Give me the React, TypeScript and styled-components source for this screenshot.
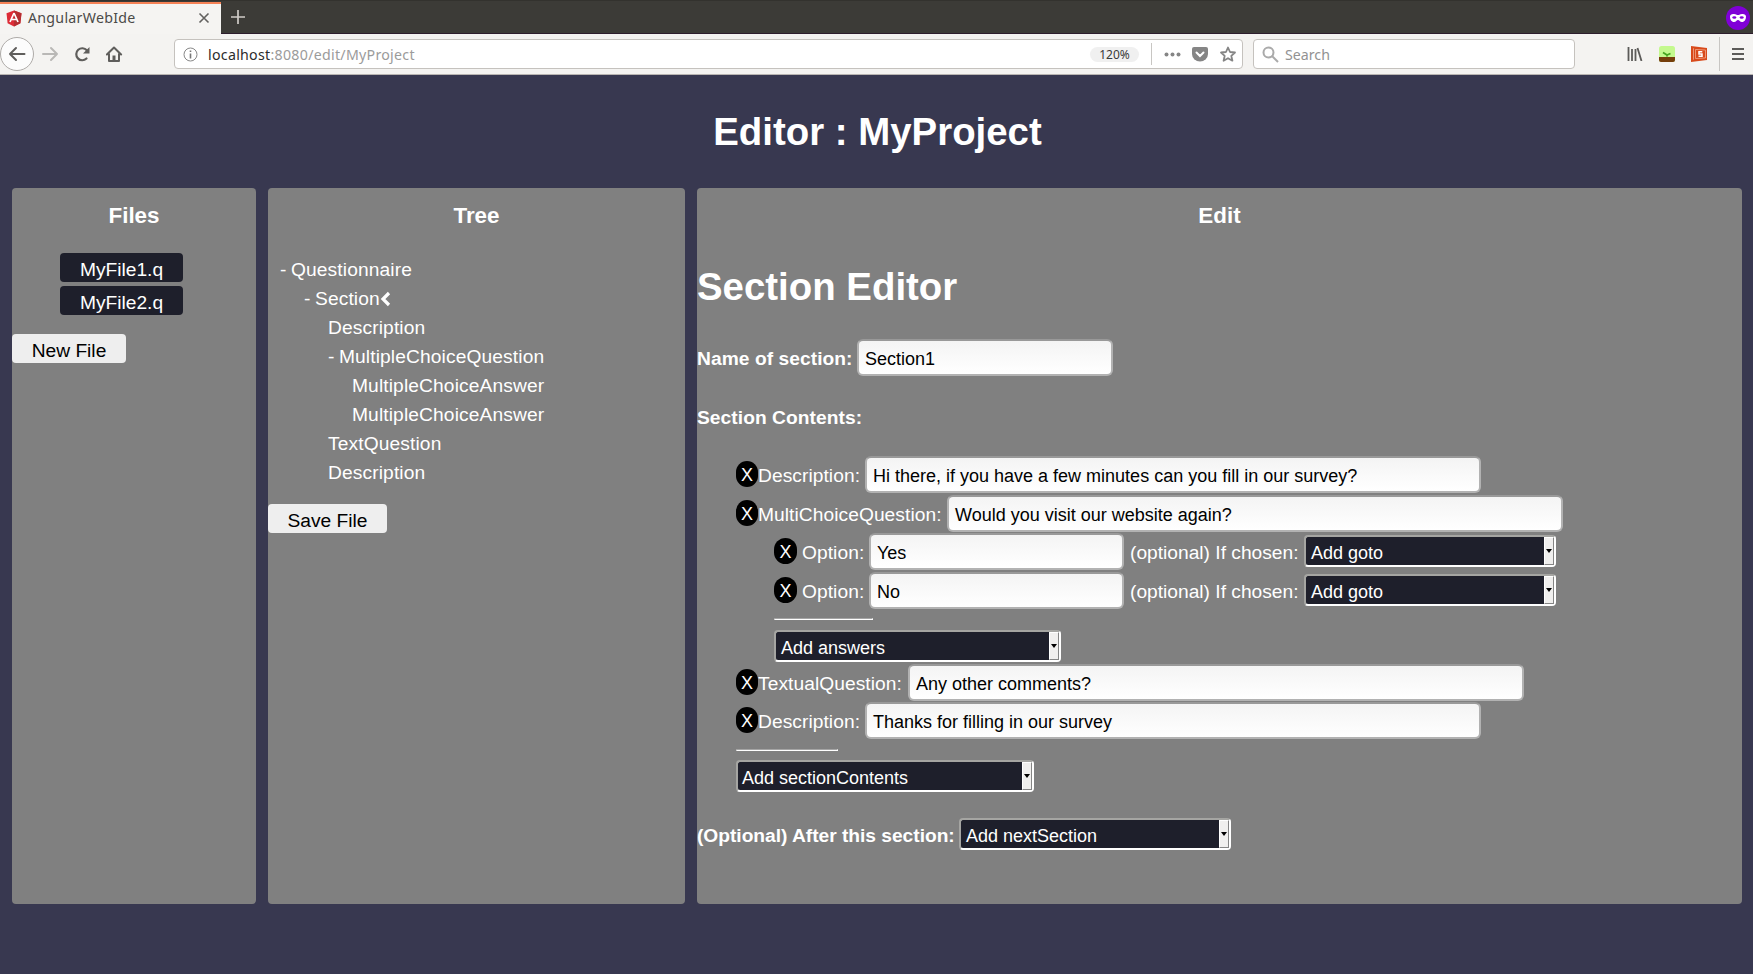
import React from "react";
import styled, { createGlobalStyle, css } from "styled-components";

const GlobalStyle = createGlobalStyle`
  * { box-sizing: border-box; }
  body { margin: 0; background: #383850; }
`;

const Page = styled.div`
  width: 1753px;
  height: 974px;
  overflow: hidden;
  background: #383850;
  color: #fff;
  font: 19.2px/29px "Liberation Sans", Arial, sans-serif;
`;

const TabStrip = styled.header`
  display: flex;
  align-items: flex-start;
  height: 34px;
  padding-top: 2px;
  background: #3c3b37;
  border-bottom: 1px solid #2d1e2d;
  box-shadow: inset 0 1px #33322e;
`;

const Tab = styled.div`
  display: flex;
  align-items: center;
  width: 221px;
  height: 32px;
  padding: 0 11px 2px 6px;
  background: #f5f4f2;
  border-top: 2px solid #f58256;
  color: #4b4a48;
  font: 14.2px "Noto Sans", sans-serif;
  white-space: nowrap;

  span { flex: 1; margin: -1px 0 0 6px; letter-spacing: 0.27px; }
`;

const NewTab = styled.svg`
  margin: 8px 0 0 10px;
`;

const PrivateBadge = styled.svg`
  margin: 4px 3px 0 auto;
`;

const Toolbar = styled.nav`
  display: flex;
  align-items: center;
  height: 41px;
  background: #f4f3f1;
  border-bottom: 1px solid #b9b5b2;
  font: 14.2px "Noto Sans", sans-serif;

  svg { display: block; flex: none; }
`;

const NavButtons = styled.div`
  display: flex;
  align-items: center;
  gap: 15px;
  width: 174px;
`;

const BackButton = styled.div`
  display: grid;
  place-items: center;
  width: 34px;
  height: 34px;
  margin-right: -7px;
  background: #fcfcfc;
  border: 1px solid #aeaba8;
  border-radius: 50%;
`;

const BarField = styled.div<{ $width: number; $left?: number }>`
  display: flex;
  align-items: center;
  width: ${(p) => p.$width}px;
  height: 30px;
  margin-left: ${(p) => p.$left ?? 0}px;
  padding-left: 8px;
  background: #fff;
  border: 1px solid #c5c2be;
  border-radius: 4px;
  white-space: nowrap;
`;

const Address = styled.div`
  flex: 1;
  margin-left: 10px;
  color: #9b9b9b;
  letter-spacing: 0.28px;
  b { color: #2c2c2c; font-weight: 400; }
`;

const Zoom = styled.div`
  width: 49px;
  height: 15px;
  margin-right: 12px;
  border-radius: 8px;
  background: #f0f0f0;
  color: #3a3a3a;
  font-size: 12px;
  line-height: 15px;
  text-align: center;
`;

const Rule = styled.div<{ $height: number; $margin?: number }>`
  width: 1px;
  height: ${(p) => p.$height}px;
  margin: 0 ${(p) => p.$margin ?? 0}px;
  background: #c8c6c3;
`;

const FieldActions = styled.div`
  display: flex;
  align-items: center;
  gap: 11px;
  margin: 0 7px 0 12px;

  svg:last-child { margin: 0 -1px 0 1px; }
`;

const SearchHint = styled.span`
  margin-left: 6px;
  color: #929292;
`;

const Extensions = styled.div`
  display: flex;
  align-items: center;
  flex: 1;
  justify-content: flex-end;
  gap: 16px;
  padding-right: 9px;
`;

const Title = styled.h1`
  height: 113px;
  margin: 0;
  padding: 34px 0 0 2px;
  font-size: 38.4px;
  line-height: 46px;
  text-align: center;
`;

const Columns = styled.main`
  display: grid;
  grid-template-columns: 244px 417px 1045px;
  gap: 12px;
  height: 716px;
  padding-left: 12px;
`;

const Panel = styled.section`
  background: #808080;
  border-radius: 4px;
  white-space: nowrap;
`;

const PanelTitle = styled.h3`
  height: 65px;
  margin: 0;
  padding: 13px 0 0;
  font-size: 22.4px;
  line-height: 29px;
  text-align: center;
`;

const buttonShape = css`
  height: 29px;
  padding: 4px 0 0;
  border: 0;
  border-radius: 4px;
  font: 19.2px/25px "Liberation Sans", Arial, sans-serif;
  text-align: center;
`;

const FileList = styled.div`
  display: flex;
  flex-direction: column;
  gap: 4px;
  padding: 0 0 19px 48px;
`;

const FileButton = styled.button`
  ${buttonShape}
  width: 123px;
  background: #1e1f2b;
  color: #fff;
`;

const ActionButton = styled.button<{ $width: number }>`
  ${buttonShape}
  display: block;
  width: ${(p) => p.$width}px;
  background: #eee;
  color: #000;
`;

const Tree = styled.div`
  height: 251px;
  padding-top: 2px;
  letter-spacing: 0.12px;
  word-spacing: -1px;
`;

const TreeRow = styled.div<{ $level: number }>`
  display: flex;
  align-items: center;
  height: 29px;
  padding-left: ${(p) => 12 + p.$level * 24}px;
`;

const EditorTitle = styled.h1`
  height: 86px;
  margin: 0;
  padding-top: 11px;
  font-size: 38.4px;
  line-height: 46px;
`;

const Row = styled.div<{ $indent?: number; $height: number; $bold?: boolean }>`
  display: flex;
  align-items: flex-start;
  height: ${(p) => p.$height}px;
  padding-left: ${(p) => p.$indent ?? 0}px;
  font-weight: ${(p) => (p.$bold ? 700 : 400)};
`;

const Label = styled.span<{ $width: number; $gap?: number; $spacing?: number }>`
  width: ${(p) => p.$width}px;
  margin-left: ${(p) => p.$gap ?? 0}px;
  padding-top: 5px;
  letter-spacing: ${(p) => p.$spacing ?? 0.06}px;
`;

const Remove = styled.button<{ $width: number }>`
  width: ${(p) => p.$width}px;
  height: 26px;
  margin-top: 5px;
  padding: 3px 0 0;
  border: 0;
  border-radius: 12px;
  background: #000;
  color: #fff;
  font: 18px/23px "Liberation Sans", Arial, sans-serif;
  text-align: center;
`;

const Field = styled.div<{ $width: number }>`
  width: ${(p) => p.$width}px;
  height: 37px;
  padding: 4px 0 0 6px;
  border: 2px solid #b2b2b2;
  border-top-color: #999;
  border-radius: 6px;
  background: linear-gradient(#f4f4f4, #fff);
  color: #000;
  font-size: 18px;
  font-weight: 400;
`;

const SelectBox = styled.div<{ $width: number; $top?: number; $pad?: number }>`
  display: flex;
  width: ${(p) => p.$width}px;
  height: 32px;
  margin-top: ${(p) => p.$top ?? 0}px;
  border: 2px solid;
  border-color: #a5a5a2 #fff #fff #a5a5a2;
  border-radius: 4px;
  background: #1e1f2b;
  font-size: 18px;
  font-weight: 400;

  span { flex: 1; padding: 2px 0 0 ${(p) => p.$pad ?? 5}px; }
`;

const Arrow = styled.div`
  display: grid;
  place-items: center;
  width: 10px;
  background: #f0efee;
  border: 1px solid;
  border-color: #fff #858585 #858585 #fff;
`;

const Divider = styled.div<{ $width: number }>`
  width: ${(p) => p.$width}px;
  height: 2px;
  border: 1px solid;
  border-color: #a5a5a5 #fff #fff #a5a5a5;
`;

const Select = ({ text, width, top, pad }: { text: string; width: number; top?: number; pad?: number }) => (
  <SelectBox $width={width} $top={top} $pad={pad}>
    <span>{text}</span>
    <Arrow>
      <svg width="6" height="4"><path d="M0 0h6L3 4z" fill="#000" /></svg>
    </Arrow>
  </SelectBox>
);

const Content = ({ label, labelWidth, value, height = 38 }: { label: string; labelWidth: number; value: string; height?: number }) => (
  <Row $indent={39} $height={height}>
    <Remove $width={22}>X</Remove>
    <Label $width={labelWidth}>{label}</Label>
    <Field $width={616}>{value}</Field>
  </Row>
);

const Option = ({ value, height }: { value: string; height: number }) => (
  <Row $indent={77} $height={height}>
    <Remove $width={23}>X</Remove>
    <Label $width={67} $gap={5}>Option:</Label>
    <Field $width={255}>{value}</Field>
    <Label $width={174} $gap={6} $spacing={0}>(optional) If chosen:</Label>
    <Select text="Add goto" width={252} top={2} />
  </Row>
);

const tree: [number, string][] = [
  [0, "- Questionnaire"],
  [1, "- Section"],
  [2, "Description"],
  [2, "- MultipleChoiceQuestion"],
  [3, "MultipleChoiceAnswer"],
  [3, "MultipleChoiceAnswer"],
  [2, "TextQuestion"],
  [2, "Description"],
];

export default function App() {
  return (
    <Page>
      <GlobalStyle />
      <TabStrip>
        <Tab>
          <svg width="16" height="17" viewBox="0 0 16 17">
            <path d="M8 .5l7.5 2.700-1.100 10L8 16.500l-6.400-3.300L.5 3.200z" fill="#dd2c37" />
            <path d="M8 .5l7.500 2.700-1.100 10L8 16.500z" fill="#b52e31" />
            <path d="M8 3l-4 9M8 3l4 9M5.500 9.500h5" stroke="#fff" strokeWidth="1.700" fill="none" />
          </svg>
          <span>AngularWebIde</span>
          <svg width="12" height="12"><path d="M1.500 1.500l9 9M10.500 1.500l-9 9" stroke="#62615f" strokeWidth="1.600" /></svg>
        </Tab>
        <NewTab width="14" height="14"><path d="M7 0v14M0 7h14" stroke="#cfccc7" strokeWidth="1.700" /></NewTab>
        <PrivateBadge width="24" height="24" viewBox="0 0 24 24">
          <circle cx="12" cy="12" r="12" fill="#8000d7" />
          <path d="M4 10.500c0-2 2-2.800 4-2.500 2 .3 2.500 1 4 1s2-.7 4-1c2-.3 4 .5 4 2.500 0 3-1.500 5.500-4 5.500-2.200 0-2.500-2-4-2s-1.800 2-4 2c-2.500 0-4-2.500-4-5.500z" fill="#fff" />
          <ellipse cx="8.300" cy="11.500" rx="2" ry="1.300" fill="#8000d7" />
          <ellipse cx="15.700" cy="11.500" rx="2" ry="1.300" fill="#8000d7" />
        </PrivateBadge>
      </TabStrip>
      <Toolbar>
        <NavButtons>
          <BackButton>
            <svg width="18" height="16"><path d="M8 2L2 8l6 6M2 8H16.500" stroke="#5f5e5c" strokeWidth="2" strokeLinecap="round" strokeLinejoin="round" fill="none" /></svg>
          </BackButton>
          <svg width="17" height="16"><path d="M9 2l6 6-6 6M15 8H1" stroke="#b9b8b6" strokeWidth="2" strokeLinecap="round" strokeLinejoin="round" fill="none" /></svg>
          <svg width="17" height="16"><path d="M12.500 12.500A6 6 0 1 1 12.800 4.300" stroke="#5f5e5c" strokeWidth="2.200" strokeLinecap="round" fill="none" /><path d="M15.500 1v6.500H9z" fill="#5f5e5c" /></svg>
          <svg width="17" height="16"><path d="M.9 8.500L8 1.500l7.100 7M3 7.500V15h10V7.500" stroke="#5f5e5c" strokeWidth="2" strokeLinecap="round" strokeLinejoin="round" fill="none" /><path d="M6.500 15V9.500h3V15z" fill="#5f5e5c" /></svg>
        </NavButtons>
        <BarField $width={1069}>
          <svg width="15" height="15"><circle cx="7.500" cy="7.500" r="6.500" stroke="#888" fill="none" /><path d="M7.500 6.500v5M7.500 3.500v1.600" stroke="#777" strokeWidth="1.600" /></svg>
          <Address><b>localhost</b>:8080/edit/MyProject</Address>
          <Zoom>120%</Zoom>
          <Rule $height={22} />
          <FieldActions>
            <svg width="17" height="5"><g fill="#858585"><circle cx="2.500" cy="2.500" r="2" /><circle cx="8.500" cy="2.500" r="2" /><circle cx="14.500" cy="2.500" r="2" /></g></svg>
            <svg width="16" height="15"><path d="M2 0h12q2 0 2 2v5a8 7.500 0 0 1-16 0V2q0-2 2-2z" fill="#858585" /><path d="M4.500 5.500L8 9l3.500-3.500" stroke="#fff" strokeWidth="2" strokeLinecap="round" fill="none" /></svg>
            <svg width="16" height="16"><path d="M8 1.500l2 4.500 5 .5-3.700 3.300 1.100 4.900L8 12.200l-4.400 2.500 1.100-4.900L1 6.500 6 6z" stroke="#858585" strokeWidth="1.800" strokeLinejoin="round" fill="none" /></svg>
          </FieldActions>
        </BarField>
        <BarField $width={322} $left={10}>
          <svg width="17" height="17"><circle cx="6.500" cy="6.500" r="5" stroke="#aaa" strokeWidth="2" fill="none" /><path d="M10 10l6 6" stroke="#aaa" strokeWidth="2" /></svg>
          <SearchHint>Search</SearchHint>
        </BarField>
        <Extensions>
          <svg width="16" height="14"><path d="M1.500 0v14M5 2v12M8.500 2v12M10.500 1l4 13" stroke="#5c5b59" strokeWidth="1.800" /></svg>
          <svg width="16" height="16"><rect width="16" height="16" rx="2.500" fill="#c4f98e" /><path d="M0 11h16v3q0 2-2 2H2q-2 0-2-2z" fill="#753e0b" /><path d="M8 10.500V8.500M8 9L4 6.500M8 9l3.500-1.500" stroke="#45a51f" strokeWidth="1.800" /></svg>
          <svg width="16" height="16"><path d="M0 0l16 2v12L0 16z" fill="#d84a1b" /><path d="M2.500 2.300v11.400M4.500 3.500l10 .5v8l-10 .5z" stroke="#f2a98d" strokeWidth=".8" fill="none" /><path d="M11.300 5.800H8V8h3v2.300H7.500" stroke="#fff" strokeWidth="1.500" fill="none" /></svg>
          <Rule $height={34} $margin={-4} />
          <svg width="12" height="12"><path d="M0 1h12M0 6h12M0 11h12" stroke="#5c5b59" strokeWidth="2" /></svg>
        </Extensions>
      </Toolbar>
      <Title>Editor : MyProject</Title>
      <Columns>
        <Panel>
          <PanelTitle>Files</PanelTitle>
          <FileList>
            <FileButton>MyFile1.q</FileButton>
            <FileButton>MyFile2.q</FileButton>
          </FileList>
          <ActionButton $width={114}>New File</ActionButton>
        </Panel>
        <Panel>
          <PanelTitle>Tree</PanelTitle>
          <Tree>
            {tree.map(([level, name], i) => (
              <TreeRow key={i} $level={level}>
                {name}
                {i === 1 && <svg width="12" height="16"><path d="M9 2L3 8l6 6" stroke="#fff" strokeWidth="3.200" fill="none" /></svg>}
              </TreeRow>
            ))}
          </Tree>
          <ActionButton $width={119}>Save File</ActionButton>
        </Panel>
        <Panel>
          <PanelTitle>Edit</PanelTitle>
          <EditorTitle>Section Editor</EditorTitle>
          <Row $height={59} $bold>
            <Label $width={160}>Name of section:</Label>
            <Field $width={256}>Section1</Field>
          </Row>
          <Row $height={58} $bold>
            <Label $width={200}>Section Contents:</Label>
          </Row>
          <Content label="Description:" labelWidth={107} value="Hi there, if you have a few minutes can you fill in our survey?" height={39} />
          <Content label="MultiChoiceQuestion:" labelWidth={189} value="Would you visit our website again?" />
          <Option value="Yes" height={39} />
          <Option value="No" height={46} />
          <Row $indent={77} $height={12}><Divider $width={99} /></Row>
          <Row $indent={77} $height={34}><Select text="Add answers" width={287} /></Row>
          <Content label="TextualQuestion:" labelWidth={150} value="Any other comments?" />
          <Content label="Description:" labelWidth={107} value="Thanks for filling in our survey" height={47} />
          <Row $indent={39} $height={11}><Divider $width={102} /></Row>
          <Row $indent={39} $height={56}><Select text="Add sectionContents" width={298} pad={4} /></Row>
          <Row $height={36} $bold>
            <Label $width={262} $spacing={-0.02}>(Optional) After this section:</Label>
            <Select text="Add nextSection" width={272} top={2} />
          </Row>
        </Panel>
      </Columns>
    </Page>
  );
}
